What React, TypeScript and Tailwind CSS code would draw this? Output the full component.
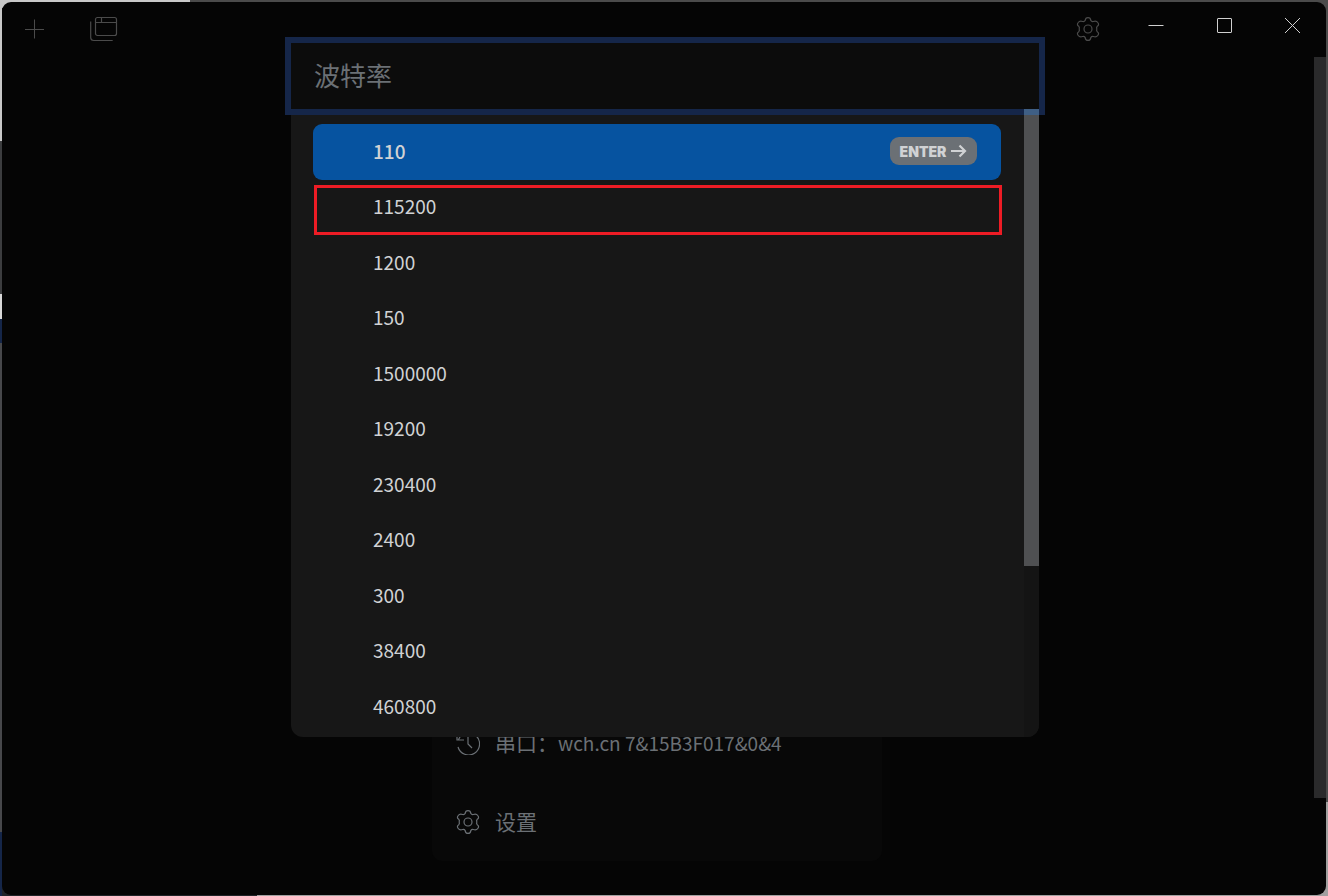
import { useState } from "react";

const RATES = ["110", "115200", "1200", "150", "1500000", "19200", "230400", "2400", "300", "38400", "460800"];

function Gear({ className }: { className?: string }) {
  return (
    <svg viewBox="0 0 24 24" fill="none" stroke="currentColor" strokeWidth="1.2" className={className} aria-hidden="true">
      <path d="M9.2 3.400 Q9.400 .6 12 .6 Q14.600 .6 14.800 3.400 Q15.600 4.800 17.300 4.500 Q20.200 3.300 21.800 5.500 Q23.600 7.800 21.200 9.300 Q20.200 10.600 20.800 12 Q20.200 13.400 21.200 14.700 Q23.600 16.200 21.800 18.500 Q20.200 20.700 17.300 19.500 Q15.600 19.200 14.800 20.600 Q14.600 23.400 12 23.400 Q9.400 23.400 9.200 20.600 Q8.400 19.200 6.700 19.500 Q3.800 20.700 2.200 18.500 Q.4 16.200 2.800 14.700 Q3.800 13.400 3.200 12 Q3.800 10.600 2.800 9.300 Q.4 7.800 2.200 5.500 Q3.800 3.300 6.700 4.500 Q8.400 4.800 9.200 3.400Z" />
      <circle cx="12" cy="12" r="4" />
    </svg>
  );
}

function TitleBar() {
  return (
    <header className="flex h-[55px] items-start justify-between text-[#4b4b4b]">
      <div className="flex gap-[46px] pt-[14px] pl-[22px]">
        <button aria-label="New tab" className="h-[26px] w-[20px]">
          <svg viewBox="0 0 20 26" fill="none" stroke="currentColor" className="h-[26px] w-[20px]" aria-hidden="true">
            <path d="M10.500 3.500v19M1 13.500h19" />
          </svg>
        </button>
        <button aria-label="Profiles" className="h-[26px] w-[28px]">
          <svg viewBox="0 0 28 26" fill="none" stroke="currentColor" strokeWidth="1.200" className="h-[26px] w-[28px]" aria-hidden="true">
            <rect x="5.500" y="1.500" width="21" height="18" rx="2" />
            <path d="M5.500 6.500h21M11.500 1.500v5M.7 5.500v16q0 3 3 3h19" />
          </svg>
        </button>
      </div>
      <div className="flex">
        <button aria-label="Settings" className="mt-[15px] mr-[22px] size-[24px]">
          <Gear className="size-[24px]" />
        </button>
        <div className="flex text-[#d0d0d0]">
          <button aria-label="Minimize" className="flex h-[46px] w-[68px] items-center justify-center">
            <svg viewBox="0 0 16 16" stroke="currentColor" className="size-[16px]" aria-hidden="true"><path d="M.5 8.500h15" /></svg>
          </button>
          <button aria-label="Maximize" className="flex h-[46px] w-[68px] items-center justify-center">
            <svg viewBox="0 0 16 16" fill="none" stroke="currentColor" className="size-[16px]" aria-hidden="true"><rect x="1.500" y="1.500" width="14" height="14" rx=".5" /></svg>
          </button>
          <button aria-label="Close" className="flex h-[46px] w-[68px] items-center justify-center">
            <svg viewBox="0 0 16 16" stroke="currentColor" className="size-[16px]" aria-hidden="true"><path d="M1 1l15 15M16 1L1 16" /></svg>
          </button>
        </div>
      </div>
    </header>
  );
}

function RateDialog() {
  const [query, setQuery] = useState("");
  return (
    <div className="absolute inset-x-0 top-[41px] flex justify-center pl-[2px]">
      <div role="dialog" aria-label="波特率" className="w-full max-w-[748px] rounded-b-[12px] bg-[#171717]">
        <input
          aria-label="波特率"
          placeholder="波特率"
          value={query}
          onChange={(e) => setQuery(e.target.value)}
          className="block h-[66px] w-full bg-[#0c0c0c] px-[23px] pb-[4px] text-[26px] text-[#d0d0d0] shadow-[0_0_0_6px_#152649] outline-none placeholder:text-[#6b7075]"
        />
        <div className="flex">
          <ul className="grid h-[628px] flex-1 grid-rows-11 pt-[15px] pr-[23px] pb-[2px] pl-[22px]">
            {RATES.map((rate, i) => (
              <li key={rate} className="relative flex">
                <button
                  className={
                    i === 0
                      ? "flex w-full items-center justify-between rounded-[9px] bg-[#0653a0] pr-[24px] pb-px pl-[60px] text-[19px] font-medium text-[#d0d2d4]"
                      : "flex w-full items-center pb-[2px] pl-[60px] text-[19px] text-[#d0d2d4]"
                  }
                >
                  <span>{rate}</span>
                  {i === 0 && (
                    <span className="flex h-[28px] w-[87px] items-center justify-center gap-[5px] rounded-[9px] bg-[#6b7075] font-['Inter',sans-serif] text-[14px] font-black">
                      ENTER
                      <svg viewBox="0 0 16 14" fill="none" stroke="currentColor" strokeWidth="2.200" className="h-[14px] w-[16px]" aria-hidden="true">
                        <path d="M0 7h14M8.500 1.500L14 7l-5.500 5.500" />
                      </svg>
                    </span>
                  )}
                </button>
                {i === 1 && (
                  <span className="pointer-events-none absolute top-[5px] -right-px bottom-0 left-px border-[3px] border-[#ee1c25]" />
                )}
              </li>
            ))}
          </ul>
          <div className="w-[15px] rounded-br-[12px] bg-[#141414]">
            <div className="h-[457px] bg-[#4f5052] shadow-[inset_0_6px_0_#3f5f85]" />
          </div>
        </div>
      </div>
    </div>
  );
}

export default function App() {
  return (
    <div className="flex min-h-screen flex-col px-[2px] pt-[2px] pb-px font-['Noto_Sans_CJK_SC',sans-serif] [background:linear-gradient(#c8c8c8_0_141px,#3c3d3f_141px_294px,#d8d8d8_294px_319px,#152649_319px_343px,#47484b_343px_832px,#152649_832px)_left/2px_100%_no-repeat,linear-gradient(#4b4b4b_0_802px,#a0a0a0_802px)_right/6px_100%_no-repeat,linear-gradient(90deg,#c8c8c8_0_190px,#4b4b4b_190px)_top/100%_8px_no-repeat,linear-gradient(90deg,#202428_0_257px,#a0a0a0_257px)]">
      <div className="relative flex flex-1 flex-col overflow-hidden rounded-[9px] bg-[#050505]">
        <TitleBar />
        <main className="flex flex-1">
          <section className="flex flex-1 flex-col items-center justify-end pr-[2px] pb-[34px] text-[21px] text-[#6b7075]">
            <div className="w-full max-w-[450px] rounded-b-[10px] bg-[#080808]">
              <a href="#serial" className="flex h-[79px] items-center gap-[15px] pl-[24px]">
                <svg viewBox="0 0 24 24" fill="none" stroke="currentColor" strokeWidth="1.200" className="size-[24px]" aria-hidden="true">
                  <path d="M1 3v6h7M2.500 8.500A11 11 0 1 1 2 16M12 6v7l4 4" />
                </svg>
                <span>
                  串口：<span className="text-[19px]">wch.cn 7&amp;15B3F017&amp;0&amp;4</span>
                </span>
              </a>
              <a href="#settings" className="flex h-[79px] items-center gap-[15px] pl-[24px]">
                <Gear className="size-[24px]" />
                设置
              </a>
            </div>
          </section>
          <div className="mb-[97px] w-[12px] bg-[#2a2a2b]" />
        </main>
        <RateDialog />
      </div>
    </div>
  );
}
